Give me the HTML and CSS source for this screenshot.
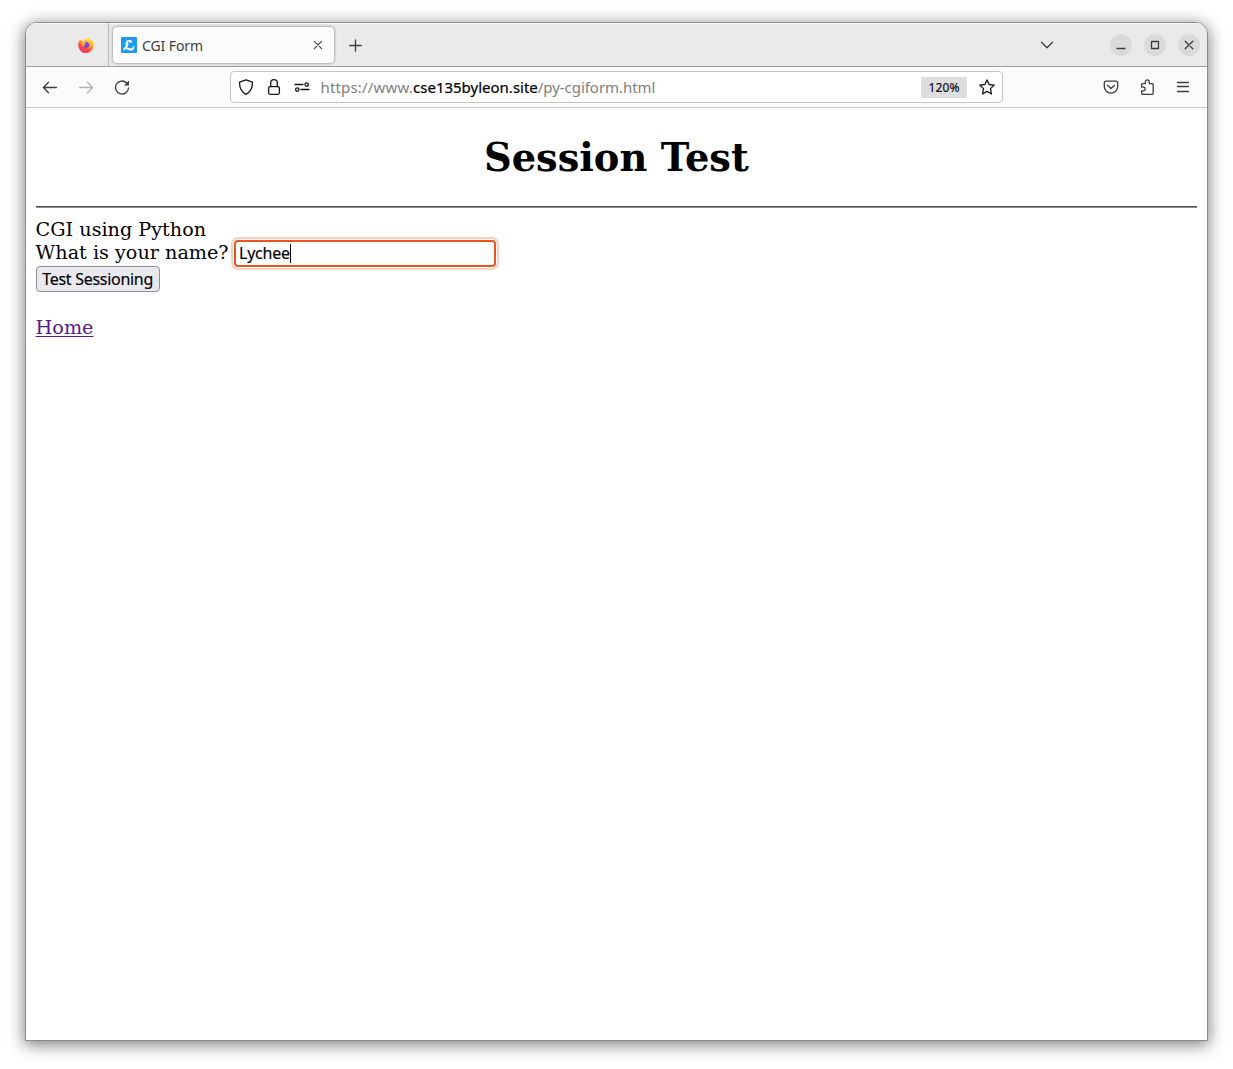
FILE: index.html
```html
<!DOCTYPE html>
<html lang="en">
<head>
<meta charset="utf-8">
<title>CGI Form</title>
<link rel="stylesheet" href="styles.css">
</head>
<body>
<div class="window">
  <header class="tabstrip">
    <div class="pinned">
      <svg width="16" height="16" viewBox="0 0 16 16">
        <defs>
          <linearGradient id="flame" x1="0.85" y1="0.05" x2="0.3" y2="1">
            <stop offset="0" stop-color="#fff04a"/><stop offset="0.35" stop-color="#ffb52c"/><stop offset="0.65" stop-color="#ff5a36"/><stop offset="1" stop-color="#f0208c"/>
          </linearGradient>
        </defs>
        <path fill="url(#flame)" d="M2.6 2.6l1.6 1.5 2-.2C6.600 2.600 7.300 2 8.200 1.500 8.500 2.400 9.100 2.900 9.800 3.100 9.600 2 9.700.900 10.700 0c.3 1.700 1.400 2.300 2.300 3.200l.4-.7c1.500 1.500 2.400 3.500 2.400 5.500A7.800 7.800 0 0 1 .2 8.500C.100 6.300.900 4.400 2.600 2.600z"/>
        <path fill="#7542e5" d="M5.200 5.500c1.200-.9 3-.9 4.300-.2 1.700.9 2.200 2.800 1.300 4.200-1.100 1.700-3.700 1.800-5 .4-.4-.5-.7-1.100-.6-1.700.8.500 2 .3 2.800-.4-1.200-.1-2-.6-2-1.300z"/>
        <path fill="#ffb02c" d="M3.600 4.300c1.300-.5 2.800-.2 3.500.7l1 .4c0 .7-.9 1-1.500 1.300-.5.500-.2 1.200.4 1.500-1 .9-2.300.5-3.200-.3-.7-1.100-.8-2.400-.2-3.600z"/>
      </svg>
    </div>
    <div class="tab">
      <span class="favicon">ℒ</span>
      <span class="tab-title">CGI Form</span>
      <svg class="line tab-close" width="10" height="10" viewBox="0 0 10 10"><path d="M1.400 1.400l7.200 7.200M8.600 1.400L1.400 8.600"/></svg>
    </div>
    <svg class="line new-tab" width="13" height="13" viewBox="0 0 13 13"><path d="M6.500 .8v11.400M.8 6.500h11.400"/></svg>
    <svg class="line all-tabs" width="14" height="14" viewBox="0 0 14 14"><path d="M1.500 4.200L7 9.700l5.500-5.500"/></svg>
    <div class="controls">
      <span class="control"><svg class="line" width="22" height="22" viewBox="0 0 22 22"><path d="M7 14.500h8"/></svg></span>
      <span class="control"><svg class="line" width="22" height="22" viewBox="0 0 22 22"><path d="M7.500 7.500h7v7h-7z"/></svg></span>
      <span class="control"><svg class="line" width="22" height="22" viewBox="0 0 22 22"><path d="M7.200 7.200l7.600 7.600M14.800 7.200l-7.600 7.600"/></svg></span>
    </div>
  </header>
  <nav class="toolbar">
    <div class="history">
      <svg class="line" width="16" height="16" viewBox="0 0 16 16"><path d="M14.500 8.500h-13M6.500 3.300L1.400 8.500l5.100 5.200"/></svg>
      <svg class="line faded" width="16" height="16" viewBox="0 0 16 16"><path d="M1.500 8.500h13M9.500 3.300l5.100 5.200-5.100 5.200"/></svg>
      <svg class="line" width="16" height="16" viewBox="0 0 16 16"><path d="M12.500 3.800A6.500 6.500 0 1 0 14.500 9"/><path class="solid" d="M15 1.600v5h-5z"/></svg>
    </div>
    <div class="urlbar">
      <svg class="line dark" width="16" height="16" viewBox="0 0 16 16"><path d="M8 .8L14.400 3.200C14.700 8.500 12.800 12.800 8 15.300 3.200 12.800 1.300 8.500 1.600 3.200z"/></svg>
      <svg class="line dark" width="16" height="16" viewBox="0 0 16 16"><rect x="2.600" y="7.600" width="10.800" height="7.700" rx="1.500"/><path d="M4.700 7.600V4a3.300 3.300 0 0 1 6.600 0v3.600"/></svg>
      <svg class="line dark" width="16" height="16" viewBox="0 0 16 16"><path d="M1 5.500h8M7 10.500h8"/><circle cx="12.700" cy="5.500" r="1.700"/><circle cx="3.300" cy="10.500" r="1.700"/></svg>
      <span class="url"><span class="scheme">https://www.</span><b>cse135byleon.site</b>/py-cgiform.html</span>
      <span class="zoom">120%</span>
      <svg class="line dark" width="16" height="16" viewBox="0 0 16 16"><path d="M8 .9l2.100 4.600 5.100.6-3.700 3.500 1 5.400L8 12.400 3.500 15l1-5.400L.8 6.100l5.100-.6z"/></svg>
    </div>
    <div class="actions">
      <svg class="line" width="16" height="16" viewBox="0 0 16 16"><path d="M3 2.200h10a1.700 1.700 0 0 1 1.700 1.700v3.600a6.700 6.700 0 0 1-13.400 0V3.900A1.700 1.700 0 0 1 3 2.200z"/><path d="M4.500 6.200L8 9.500l3.500-3.300"/></svg>
      <svg class="line" width="16" height="16" viewBox="0 0 16 16"><path d="M2.600 7.200V5.600q0-1 1-1h2.800V2.700a1.900 1.900 0 0 1 3.800 0v1.900h3q1 0 1 1v8.700q0 1-1 1H3.600q-1 0-1-1v-2.500h1.800a1.800 1.800 0 0 0 0-3.600H2.600z"/></svg>
      <svg class="line" width="16" height="16" viewBox="0 0 16 16"><path d="M2.500 3.500h11M2.500 7.500h11M2.500 12.500h11"/></svg>
    </div>
  </nav>
  <main class="page">
    <h1>Session Test</h1>
    <hr>
    <div class="intro">CGI using Python</div>
    <div class="question"><span class="label">What is your name?</span><span class="field">Lychee<i class="caret"></i></span></div>
    <button class="submit">Test Sessioning</button>
    <a class="home" href="#">Home</a>
  </main>
</div>
</body>
</html>
```
FILE: styles.css
```css
* { box-sizing: border-box; }
body {
  margin: 0;
  padding: 22px 25px 28px;
  height: 1069px;
  background: #fff;
  overflow: hidden;
  font-family: "Noto Sans", "Open Sans", sans-serif;
}
svg { display: block; flex: none; }
.line { fill: none; stroke: #3c3c3c; stroke-width: 1.3; stroke-linejoin: round; stroke-linecap: round; }
.dark { stroke: #15141a; stroke-width: 1.3; }
.faded { stroke: #b4b4b4; }
.solid { fill: #3c3c3c; stroke: none; }

.window {
  width: 1183px;
  height: 1019px;
  border: 1px solid #8b8b8b;
  border-radius: 12px 12px 0 0;
  background: #fff;
  overflow: hidden;
  box-shadow: 0 3px 16px 1px rgba(0, 0, 0, .5);
}
.tabstrip {
  display: flex;
  align-items: center;
  height: 44px;
  background: #eaeaea;
  border-bottom: 1px solid #9e9e9e;
  box-shadow: inset 0 1px #f8f8f8;
}
.pinned {
  display: flex;
  align-items: center;
  justify-content: flex-end;
  width: 83px;
  height: 43px;
  padding: 1px 14px 0 0;
  border-right: 1px solid #b5b5b5;
}
.tab {
  display: flex;
  align-items: center;
  width: 221px;
  height: 36px;
  margin: 1px 0 0 4px;
  padding: 0 11px 0 8px;
  border-radius: 4px;
  background: #fcfcfc;
  box-shadow: 0 0 3px rgba(0, 0, 0, .5);
}
.favicon {
  width: 16px;
  height: 16px;
  border-radius: 1px;
  background: #1d9bf0;
  color: #fff;
  font: bold 13px/18px "DejaVu Sans", sans-serif;
  -webkit-text-stroke: .6px #fff;
  text-align: center;
}
.tab-title { margin-left: 5px; color: #3c3c3c; font-size: 14px; letter-spacing: -.1px; }
.tab-close { margin-left: auto; stroke-width: 1.1; }
.new-tab { margin: 2px 0 0 15px; }
.all-tabs { margin-left: auto; }
.controls { display: flex; gap: 12px; margin: 0 7px 0 56px; }
.control { width: 22px; height: 22px; border-radius: 50%; background: #dadada; }

.toolbar {
  display: flex;
  align-items: center;
  height: 41px;
  background: #fbfbfb;
  border-bottom: 1px solid #c7c7c7;
}
.history { display: flex; gap: 20px; width: 204px; padding-left: 16px; }
.urlbar {
  display: flex;
  align-items: center;
  gap: 12px;
  width: 773px;
  height: 32px;
  padding: 0 7px;
  border: 1px solid #c5c5c5;
  border-radius: 4px;
  background: #fff;
}
.url { margin-left: -1.5px; color: #808080; font-size: 15px; letter-spacing: -.05px; white-space: nowrap; }
.url .scheme { letter-spacing: .17px; }
.url b { color: #000; font-weight: 400; letter-spacing: 0; -webkit-text-stroke: .2px #000; }
.zoom {
  width: 46px;
  height: 21px;
  margin-left: auto;
  border-radius: 2px;
  background: #dedede;
  color: #111;
  font-size: 12px;
  line-height: 21px;
  letter-spacing: .1px;
  text-align: center;
  -webkit-text-stroke: .2px #111;
}
.actions { display: flex; gap: 20px; margin-left: 100px; }

.page {
  display: flex;
  flex-direction: column;
  align-items: flex-start;
  padding: 0 10px 0 9.6px;
  color: #000;
  font: 19.2px/23px "DejaVu Serif", serif;
}
.page h1 { align-self: stretch; margin: 27px 0 0; font-size: 38.4px; line-height: 46px; text-align: center; }
.page hr { align-self: stretch; height: 2px; margin: 25px 0 10px; border: 0; border-top: 1px solid #555; background: #8a8a8a; }
.question { display: flex; align-items: center; height: 24px; }
.label { padding-bottom: 2px; }
.field {
  display: flex;
  align-items: center;
  width: 262px;
  height: 27px;
  margin: 1px 0 0 5.4px;
  padding-left: 3px;
  border: 2px solid #e95420;
  border-radius: 4px;
  outline: 2px solid #fbd0c2;
  outline-offset: 1px;
  font: 16px/23px "Noto Sans", sans-serif;
  letter-spacing: -.25px;
  -webkit-text-stroke: .15px #000;
}
.caret { width: 1px; height: 19px; background: #000; }
.submit {
  height: 26px;
  width: 124px;
  margin: 1px 0 24px;
  padding: 0;
  border: 1px solid #8f8f9d;
  border-radius: 4px;
  background: #e9e9ed;
  color: #000;
  font: 16px/22px "Noto Sans", sans-serif;
  letter-spacing: -.28px;
  white-space: nowrap;
  -webkit-text-stroke: .15px #000;
}
.home { color: #551a8b; text-underline-offset: 2px; }
```
